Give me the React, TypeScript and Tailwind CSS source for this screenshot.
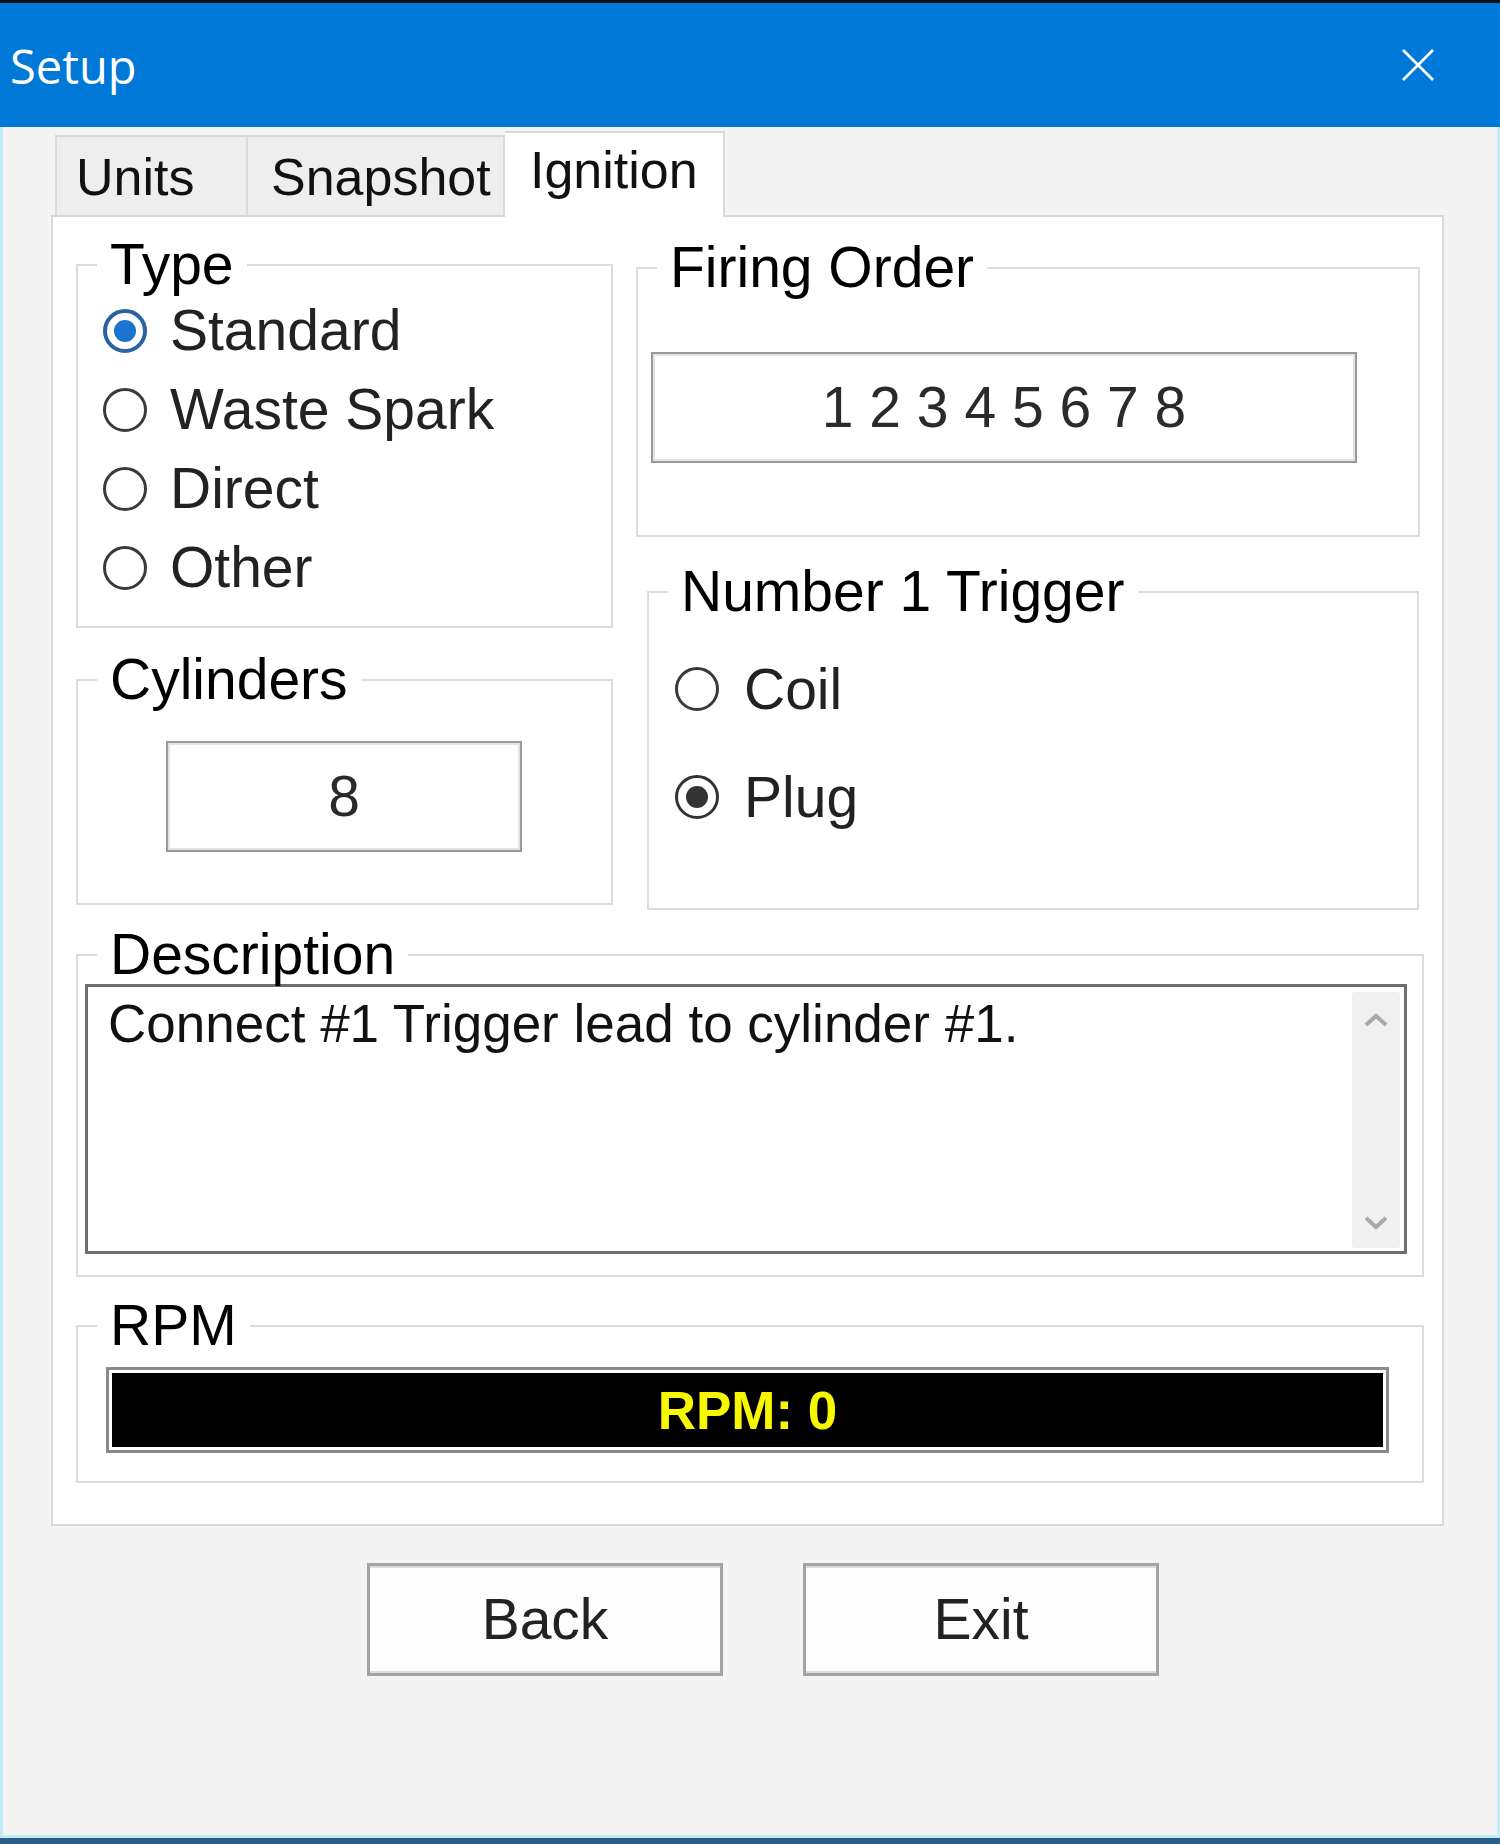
import React from "react";

function Radio({ checked, tone }: { checked?: boolean; tone?: "blue" | "dark" }) {
  if (checked && tone === "blue") {
    return (
      <span className="w-[44px] h-[44px] rounded-full border-[4px] border-[#2b63a0] bg-white flex items-center justify-center shrink-0">
        <span className="w-[22px] h-[22px] rounded-full bg-[#1a74d0]" />
      </span>
    );
  }
  if (checked) {
    return (
      <span className="w-[44px] h-[44px] rounded-full border-[3px] border-[#333333] bg-white flex items-center justify-center shrink-0">
        <span className="w-[22px] h-[22px] rounded-full bg-[#333333]" />
      </span>
    );
  }
  return <span className="w-[44px] h-[44px] rounded-full border-[3px] border-[#3a3a3a] bg-white shrink-0" />;
}

function Legend({ children }: { children: React.ReactNode }) {
  return (
    <legend className="ml-[19px] px-[13px] text-[57px] leading-none text-black">{children}</legend>
  );
}

function Chevron({ up }: { up?: boolean }) {
  return (
    <svg width="26" height="16" viewBox="0 0 26 16">
      <polyline
        points={up ? "3,13 13,4 23,13" : "3,3 13,12 23,3"}
        fill="none"
        stroke="#a9a9a9"
        strokeWidth="4"
      />
    </svg>
  );
}

export default function App() {
  return (
    <div className="w-[1500px] h-[1844px] flex flex-col font-[family-name:Liberation_Sans,Arial,sans-serif] overflow-hidden">
      {/* Title bar */}
      <div className="h-[127px] shrink-0 bg-[#0078d7] border-t-[3px] border-[#111111] flex items-start justify-between">
        <div className="pl-[10px] pt-[40px] text-[47px] leading-none text-white font-[family-name:Open_Sans,sans-serif]">
          Setup
        </div>
        <div className="pt-[45px] pr-[65px]">
          <svg width="34" height="34" viewBox="0 0 34 34">
            <line x1="2" y1="2" x2="32" y2="32" stroke="white" strokeWidth="2.6" />
            <line x1="32" y1="2" x2="2" y2="32" stroke="white" strokeWidth="2.6" />
          </svg>
        </div>
      </div>

      {/* Body */}
      <div className="flex-1 bg-[#f4f4f4] border-x-[3px] border-b-[3px] border-[#c3ebf8] flex flex-col">
        {/* Tabs */}
        <div className="ml-[52px] mt-[4px] h-[84px] flex items-end text-[52px] leading-none text-[#111111]">
          <div className="w-[193px] h-[80px] bg-[#eeeeee] border-2 border-b-0 border-[#d9d9d9] pl-[19px] pt-[14px]">
            Units
          </div>
          <div className="w-[257px] h-[80px] bg-[#eeeeee] border-t-2 border-r-2 border-[#d9d9d9] pl-[23px] pt-[14px]">
            Snapshot
          </div>
          <div className="relative z-10 -mb-[2px] w-[220px] h-[86px] bg-white border-t-2 border-r-2 border-[#d9d9d9] pl-[25px] pt-[11px]">
            Ignition
          </div>
        </div>

        {/* Panel */}
        <div className="ml-[48px] w-[1393px] h-[1311px] shrink-0 bg-white border-2 border-[#d9d9d9] pt-[19px] px-[23px]">
          <div className="flex items-start">
            {/* Left column */}
            <div className="w-[537px] flex flex-col">
              <fieldset className="w-[537px] h-[392px] border-2 border-[#dcdcdc]">
                <Legend>Type</Legend>
                <div className="-mt-[2px] flex flex-col text-[57px] leading-none text-[#222222]">
                  {[
                    { label: "Standard", checked: true },
                    { label: "Waste Spark" },
                    { label: "Direct" },
                    { label: "Other" },
                  ].map((r) => (
                    <div key={r.label} className="h-[79px] flex items-center pl-[25px] gap-[23px]">
                      <Radio checked={r.checked} tone="blue" />
                      <span>{r.label}</span>
                    </div>
                  ))}
                </div>
              </fieldset>

              <fieldset className="mt-[23px] w-[537px] h-[254px] border-2 border-[#dcdcdc]">
                <Legend>Cylinders</Legend>
                <div className="ml-[88px] mt-[33px] w-[356px] h-[111px] border-2 border-[#9a9a9a] shadow-[inset_0_0_0_2px_#e4e4e4] bg-white flex items-center justify-center text-[57px] leading-none text-[#2a2a2a]">
                  8
                </div>
              </fieldset>
            </div>

            {/* Right column */}
            <div className="ml-[23px] flex flex-col">
              <fieldset className="mt-[3px] w-[784px] h-[298px] border-2 border-[#dcdcdc]">
                <Legend>Firing Order</Legend>
                <div className="ml-[13px] mt-[56px] w-[706px] h-[111px] border-2 border-[#9a9a9a] shadow-[inset_0_0_0_2px_#e4e4e4] bg-white flex items-center justify-center text-[57px] leading-none text-[#2a2a2a]">
                  1 2 3 4 5 6 7 8
                </div>
              </fieldset>

              <fieldset className="ml-[11px] mt-[26px] w-[772px] h-[347px] border-2 border-[#dcdcdc]">
                <Legend>Number 1 Trigger</Legend>
                <div className="mt-[29px] flex flex-col gap-[28px] text-[57px] leading-none text-[#222222]">
                  <div className="h-[80px] flex items-center pl-[26px] gap-[25px]">
                    <Radio />
                    <span>Coil</span>
                  </div>
                  <div className="h-[80px] flex items-center pl-[26px] gap-[25px]">
                    <Radio checked tone="dark" />
                    <span>Plug</span>
                  </div>
                </div>
              </fieldset>
            </div>
          </div>

          {/* Description */}
          <fieldset className="mt-[16px] w-[1348px] h-[351px] border-2 border-[#dcdcdc]">
            <Legend>Description</Legend>
            <div className="ml-[7px] mt-[1px] w-[1322px] h-[270px] border-[3px] border-[#6e6e6e] bg-white flex">
              <div className="flex-1 pl-[20px] pt-[10px] text-[53px] leading-none text-[#111111]">
                Connect #1 Trigger lead to cylinder #1.
              </div>
              <div className="w-[48px] mt-[5px] mb-[3px] mr-[4px] rounded-[3px] bg-[#f0f0f0] flex flex-col items-center justify-between pt-[20px] pb-[17px]">
                <Chevron up />
                <Chevron />
              </div>
            </div>
          </fieldset>

          {/* RPM */}
          <fieldset className="mt-[20px] w-[1348px] h-[186px] border-2 border-[#dcdcdc]">
            <Legend>RPM</Legend>
            <div className="ml-[28px] mt-[13px] w-[1283px] h-[86px] border-[3px] border-[#8a8a8a] bg-white p-[3px]">
              <div className="h-full bg-black flex items-center justify-center text-[53px] font-bold leading-none text-[#f7f700]">
                RPM: 0
              </div>
            </div>
          </fieldset>
        </div>

        {/* Buttons */}
        <div className="mt-[37px] ml-[364px] flex gap-[80px] text-[57px] leading-none text-[#222222]">
          <button className="w-[356px] h-[113px] bg-[#fdfdfd] border-[3px] border-[#a3a3a3] shadow-[inset_0_2px_0_#dcdcdc,inset_0_-2px_0_#dcdcdc] flex items-center justify-center">
            Back
          </button>
          <button className="w-[356px] h-[113px] bg-[#fdfdfd] border-[3px] border-[#a3a3a3] shadow-[inset_0_2px_0_#dcdcdc,inset_0_-2px_0_#dcdcdc] flex items-center justify-center">
            Exit
          </button>
        </div>
      </div>
      <div className="h-[6px] shrink-0 bg-[#2a6088]" />
    </div>
  );
}
